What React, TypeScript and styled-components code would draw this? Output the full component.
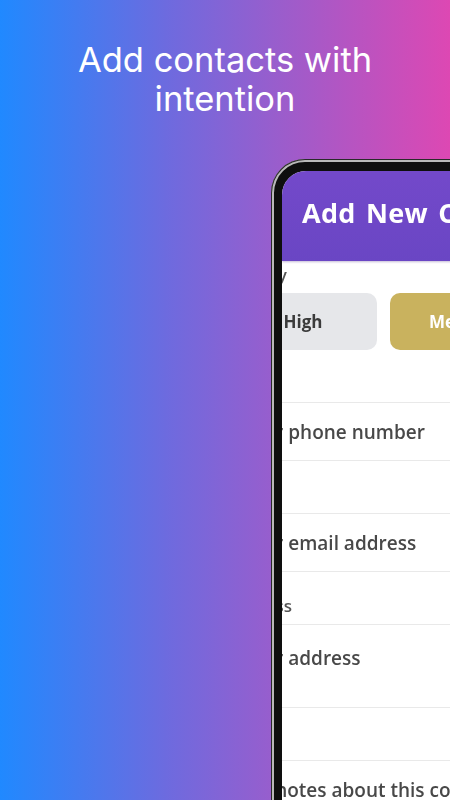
import React from 'react';
import styled, { createGlobalStyle } from 'styled-components';

type Priority = 'High' | 'Medium' | 'Low';

const fields = [
  { label: 'Phone', placeholder: 'Enter your phone number', tall: false },
  { label: 'Email', placeholder: 'Enter your email address', tall: false },
  { label: 'Address', placeholder: 'Enter your address', tall: true },
  { label: 'Notes', placeholder: 'Add your notes about this contact', tall: false },
];

const App: React.FC = () => {
  const selected: Priority = 'Medium';

  return (
    <>
      <GlobalStyle />
      <Page>
        <Headline>Add contacts with intention</Headline>
        <Stage>
          <Phone>
            <Screen>
              <Header>
                <Title>Add New Contact</Title>
              </Header>
              <Form>
                <Group>
                  <Label>Priority</Label>
                  <Options>
                    {(['High', 'Medium', 'Low'] as Priority[]).map((p) => (
                      <Option key={p} $active={p === selected}>
                        {p}
                      </Option>
                    ))}
                  </Options>
                </Group>
                {fields.map((f) => (
                  <Group key={f.label}>
                    <Label>{f.label}</Label>
                    <Field $tall={f.tall}>{f.placeholder}</Field>
                  </Group>
                ))}
              </Form>
            </Screen>
          </Phone>
        </Stage>
      </Page>
    </>
  );
};

export default App;

const GlobalStyle = createGlobalStyle`
  html, body {
    margin: 0;
    padding: 0;
  }

  body {
    font-family: Inter, "Liberation Sans", sans-serif;
  }
`;

const Page = styled.div`
  width: 450px;
  height: 800px;
  overflow: hidden;
  display: flex;
  flex-direction: column;
  align-items: center;
  background: linear-gradient(90deg, #2089ff 0%, #6f6ade 38%, #9a5dcc 62%, #dd48b3 100%);
`;

const Headline = styled.h1`
  margin: 40px 0 0;
  width: 320px;
  font-family: Inter, "Liberation Sans", sans-serif;
  font-size: 34.5px;
  font-weight: 400;
  line-height: 39px;
  color: #fff;
  text-align: center;
`;

const Stage = styled.div`
  align-self: stretch;
  display: flex;
  padding: 41px 0 0 271px;
`;

const Phone = styled.div`
  flex-shrink: 0;
  width: 320px;
  height: 700px;
  padding: 12px 0 0 11px;
  box-sizing: border-box;
  border-radius: 34px;
  background: #0e0e0e;
  box-shadow: inset 0 0 0 1px #2a2a2a, inset 0 0 0 3px #b9b9b9;
`;

const Screen = styled.div`
  height: 100%;
  overflow: hidden;
  border-radius: 24px 0 0 0;
  background: #fff;
  filter: blur(0.6px);
`;

const Header = styled.div`
  height: 90px;
  display: flex;
  align-items: center;
  padding: 0 0 0 20px;
  background: linear-gradient(180deg, #7349ca 0%, #6a46c4 100%);
  box-shadow: 0 1px 2px rgba(60, 30, 120, 0.3);
`;

const Title = styled.div`
  font-family: "Open Sans", "Liberation Sans", sans-serif;
  font-size: 27px;
  font-weight: 700;
  letter-spacing: 0.3px;
  word-spacing: 3px;
  color: #fff;
  white-space: nowrap;
  padding-bottom: 8px;
`;

const Form = styled.div`
  margin-left: -112px;
  padding-top: 4px;
  display: flex;
  flex-direction: column;
  gap: 24px;
`;

const Group = styled.div`
  display: flex;
  flex-direction: column;
  gap: 8px;
`;

const Label = styled.div`
  padding-left: 56px;
  height: 20px;
  font-family: "Open Sans", "Liberation Sans", sans-serif;
  font-size: 17px;
  font-weight: 600;
  line-height: 20px;
  color: #555;
`;

const Options = styled.div`
  display: flex;
  gap: 13px;
  padding-left: 59px;
`;

const Option = styled.div<{ $active: boolean }>`
  flex-shrink: 0;
  width: 148px;
  height: 57px;
  border-radius: 10px;
  display: flex;
  align-items: center;
  justify-content: center;
  font-family: "Open Sans", "Liberation Sans", sans-serif;
  font-size: 17px;
  font-weight: 700;
  color: ${(p) => (p.$active ? '#fff' : '#3b3b3b')};
  background: ${(p) => (p.$active ? '#c9b25e' : '#e6e7ea')};
`;

const Field = styled.div<{ $tall: boolean }>`
  height: ${(p) => (p.$tall ? 84 : 59)}px;
  box-sizing: border-box;
  display: flex;
  align-items: ${(p) => (p.$tall ? 'flex-start' : 'center')};
  padding: ${(p) => (p.$tall ? '20px' : '0')} 0 0 17px;
  border-top: 1px solid #e9e9e9;
  border-bottom: 1px solid #e9e9e9;
  font-family: "Open Sans", "Liberation Sans", sans-serif;
  font-size: 19px;
  font-weight: 600;
  color: #484848;
  white-space: nowrap;
`;
